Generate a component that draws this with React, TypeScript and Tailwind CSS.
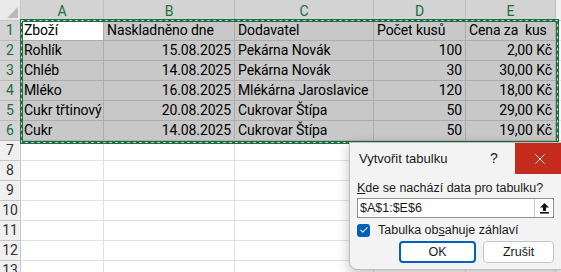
import { Check, X } from "lucide-react"

const cols = ["A", "B", "C", "D", "E"]
const widths = ["w-[83px]", "w-[131px]", "w-[139px]", "w-[92px]", "w-[90px]"]

const rows: { v: string; right?: boolean }[][] = [
  [{ v: "Zboží" }, { v: "Naskladněno dne" }, { v: "Dodavatel" }, { v: "Počet kusů" }, { v: "Cena za  kus" }],
  [{ v: "Rohlík" }, { v: "15.08.2025", right: true }, { v: "Pekárna Novák" }, { v: "100", right: true }, { v: "2,00 Kč", right: true }],
  [{ v: "Chléb" }, { v: "14.08.2025", right: true }, { v: "Pekárna Novák" }, { v: "30", right: true }, { v: "30,00 Kč", right: true }],
  [{ v: "Mléko" }, { v: "16.08.2025", right: true }, { v: "Mlékárna Jaroslavice" }, { v: "120", right: true }, { v: "18,00 Kč", right: true }],
  [{ v: "Cukr třtinový" }, { v: "20.08.2025", right: true }, { v: "Cukrovar Štípa" }, { v: "50", right: true }, { v: "29,00 Kč", right: true }],
  [{ v: "Cukr" }, { v: "14.08.2025", right: true }, { v: "Cukrovar Štípa" }, { v: "50", right: true }, { v: "19,00 Kč", right: true }],
]

function Dialog() {
  return (
    <div className="absolute left-[349px] top-[142px] w-[216px] h-[128px] bg-[#f3f3f3] border border-[#bdbdbd] rounded-bl-[8px] shadow-[0_4px_12px_rgba(0,0,0,0.25)] font-['Liberation_Sans',sans-serif] text-[#1a1a1a] whitespace-nowrap">
      <div className="flex items-center h-[31px]">
        <div className="flex-1 pl-[9px] text-[13px]">Vytvořit tabulku</div>
        <div className="w-[25px] text-[14px]">?</div>
        <div className="w-[49px] h-full bg-[#c42b1c] flex items-center justify-center text-white">
          <X size={18} strokeWidth={1.2} />
        </div>
      </div>
      <div className="px-[7px] pt-[6px]">
        <div className="text-[12.5px] leading-[16px]">
          <span className="underline">K</span>de se nachází data pro tabulku?
        </div>
        <div className="mt-[2px] h-[20px] w-[197px] bg-white border border-[#8f8f8f] flex items-center">
          <div className="flex-1 pl-[2px] text-[12.5px]">$A$1:$E$6</div>
          <div className="w-[19px] h-[18px] border-l border-[#c9c9c9] flex items-center justify-center">
            <svg width="11" height="12" viewBox="0 0 11 12">
              <path d="M5.5 1 L10 5.5 H7 V9 H4 V5.5 H1 Z" fill="#111" />
              <rect x="1" y="10" width="9" height="1.6" fill="#111" />
            </svg>
          </div>
        </div>
        <div className="mt-[4px] flex items-center gap-[8px]">
          <div className="w-[13px] h-[13px] rounded-[3px] bg-[#005fb8] flex items-center justify-center">
            <Check size={10} strokeWidth={2.5} className="text-white" />
          </div>
          <div className="text-[12.5px] leading-[16px]">
            Tabulka ob<span className="underline">s</span>ahuje záhlaví
          </div>
        </div>
        <div className="mt-[3px] flex gap-[7px] pl-[42px]">
          <div className="w-[77px] h-[22px] bg-white border-2 border-[#005fb8] rounded-[4px] flex items-center justify-center text-[12.5px]">
            OK
          </div>
          <div className="w-[71px] h-[22px] bg-white border border-[#c4c4c4] rounded-[4px] flex items-center justify-center text-[12.5px]">
            Zrušit
          </div>
        </div>
      </div>
    </div>
  )
}

export default function App() {
  return (
    <div className="relative w-[561px] h-[272px] overflow-hidden bg-white font-['Roboto',sans-serif]">
      <div className="flex h-[21px]">
        <div className="w-[21px] h-full bg-[#e9e9e9] border-r border-b border-[#c6c6c6] relative">
          <div className="absolute right-[2px] bottom-[2px] w-0 h-0 border-l-[11px] border-l-transparent border-b-[11px] border-b-[#b9b9b9]" />
        </div>
        {cols.map((c, i) => (
          <div
            key={c}
            className={`${widths[i]} h-full bg-[#d3d3d3] border-r border-b border-[#bcbcbc] flex items-center justify-center text-[14px] text-[#1b6f3f] pt-[3px]`}
          >
            {c}
          </div>
        ))}
        <div className="flex-1 h-full bg-[#f0f0f0] border-b border-[#c6c6c6]" />
      </div>

      {rows.map((r, ri) => (
        <div key={ri} className="flex h-[20px]">
          <div className="w-[21px] h-full bg-[#d3d3d3] border-r border-b border-[#bcbcbc] flex items-center justify-center text-[14px] text-[#1b6f3f]">
            {ri + 1}
          </div>
          {r.map((cell, ci) => (
            <div
              key={ci}
              className={`${widths[ci]} h-full border-r border-b border-[#acacac] flex items-center px-[3px] text-[14px] tracking-[-0.1px] text-black whitespace-pre overflow-visible ${
                ri === 0 && ci === 0 ? "bg-white" : "bg-[#c8c8c8]"
              } ${cell.right ? "justify-end" : ""}`}
            >
              {cell.v}
            </div>
          ))}
          <div className="flex-1 h-full border-b border-[#e1e1e1]" />
        </div>
      ))}

      {[7, 8, 9, 10, 11, 12, 13].map((n) => (
        <div key={n} className="flex h-[20px]">
          <div className="w-[21px] h-full bg-[#f0f0f0] border-r border-b border-[#c6c6c6] flex items-center justify-center text-[14px] text-[#333]">
            {n}
          </div>
          {widths.map((w, ci) => (
            <div key={ci} className={`${w} h-full border-r border-b border-[#e1e1e1]`} />
          ))}
          <div className="flex-1 h-full border-b border-[#e1e1e1]" />
        </div>
      ))}

      <svg className="absolute left-[20px] top-[19px]" width="539" height="125">
        <rect x="1.5" y="1.5" width="536" height="122" fill="none" stroke="#1e7145" strokeWidth="3" />
        <rect x="1.5" y="1.5" width="536" height="122" fill="none" stroke="#fff" strokeWidth="1" strokeDasharray="2 4" />
      </svg>

      <Dialog />
    </div>
  )
}
